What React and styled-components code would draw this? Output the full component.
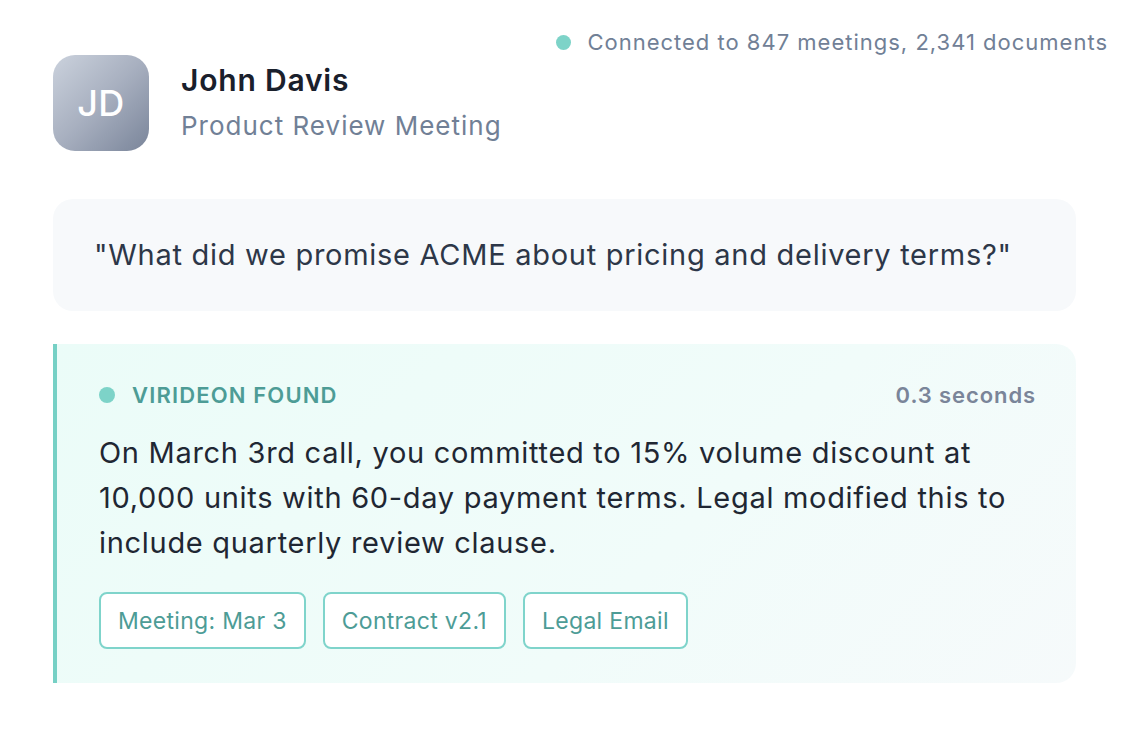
import styled, { createGlobalStyle } from "styled-components";

const GlobalStyle = createGlobalStyle`
  html, body {
    margin: 0;
    padding: 0;
    background: #ffffff;
    font-family: Inter, "Noto Sans", "Liberation Sans", sans-serif;
    -webkit-font-smoothing: antialiased;
  }
  * { box-sizing: border-box; }
`;

const Page = styled.div`
  width: 1136px;
  height: 736px;
  padding: 30px 28px 0 53px;
  display: flex;
  flex-direction: column;
`;

const StatusRow = styled.div`
  display: flex;
  justify-content: flex-end;
  align-items: center;
  gap: 16px;
  height: 24px;
  font-size: 22px;
  letter-spacing: 1px;
  color: #718096;
`;

const Dot = styled.span`
  width: ${(p) => p.size || 15}px;
  height: ${(p) => p.size || 15}px;
  border-radius: 50%;
  background: #7dd3c8;
  flex-shrink: 0;
`;

const Content = styled.div`
  width: 1023px;
  display: flex;
  flex-direction: column;
`;

const Header = styled.div`
  display: flex;
  align-items: center;
  gap: 32px;
  margin-top: 1px;
`;

const Avatar = styled.div`
  width: 96px;
  height: 96px;
  border-radius: 22px;
  background: linear-gradient(135deg, #cbd2dd 0%, #a7afbf 50%, #7a859a 100%);
  color: #ffffff;
  font-size: 36px;
  font-weight: 500;
  letter-spacing: 0.5px;
  display: flex;
  align-items: center;
  justify-content: center;
`;

const NameBlock = styled.div`
  display: flex;
  flex-direction: column;
  gap: 12px;
  margin-top: -2px;
`;

const Name = styled.div`
  font-size: 30px;
  font-weight: 600;
  color: #1a202c;
  line-height: 36px;
  letter-spacing: 0.8px;
`;

const Subtitle = styled.div`
  font-size: 26px;
  color: #718096;
  line-height: 32px;
  letter-spacing: 1px;
`;

const QueryCard = styled.div`
  margin-top: 48px;
  background: #f7f9fb;
  border-radius: 20px;
  padding: 38px 41px;
  font-size: 29px;
  line-height: 36px;
  letter-spacing: 0.72px;
  color: #2d3748;
`;

const ResultCard = styled.div`
  margin-top: 33px;
  background: linear-gradient(135deg, #ebfcf8 0%, #f1fcfa 60%, #f6fafb 100%);
  border-left: 4px solid #76d0c5;
  border-radius: 0 20px 20px 0;
  padding: 36px 40px 34px 42px;
  display: flex;
  flex-direction: column;
`;

const ResultHeader = styled.div`
  display: flex;
  align-items: center;
  justify-content: space-between;
  height: 30px;
`;

const Label = styled.div`
  display: flex;
  align-items: center;
  gap: 17px;
  font-size: 22px;
  font-weight: 600;
  color: #4d9c96;
  letter-spacing: 1.15px;
`;

const Timing = styled.div`
  font-size: 22px;
  font-weight: 600;
  color: #7a8599;
  letter-spacing: 0.9px;
`;

const Answer = styled.p`
  margin: 20px 0 0;
  font-size: 29px;
  line-height: 45px;
  letter-spacing: 0.7px;
  color: #1f2733;
`;

const Tags = styled.div`
  display: flex;
  gap: 17px;
  margin-top: 27px;
`;

const Tag = styled.div`
  height: 57px;
  padding: 0 17px;
  display: flex;
  align-items: center;
  border: 2px solid #7fd4cb;
  border-radius: 8px;
  background: #ffffff;
  font-size: 23px;
  letter-spacing: 0.3px;
  color: #4d9c96;
`;

export default function App() {
  const sources = ["Meeting: Mar 3", "Contract v2.1", "Legal Email"];
  return (
    <>
      <GlobalStyle />
      <Page>
        <StatusRow>
          <Dot />
          Connected to 847 meetings, 2,341 documents
        </StatusRow>
        <Content>
          <Header>
            <Avatar>JD</Avatar>
            <NameBlock>
              <Name>John Davis</Name>
              <Subtitle>Product Review Meeting</Subtitle>
            </NameBlock>
          </Header>
          <QueryCard>
            "What did we promise ACME about pricing and delivery terms?"
          </QueryCard>
          <ResultCard>
            <ResultHeader>
              <Label>
                <Dot size={16} />
                VIRIDEON FOUND
              </Label>
              <Timing>0.3 seconds</Timing>
            </ResultHeader>
            <Answer>
              On March 3rd call, you committed to 15% volume discount at
              10,000 units with 60-day payment terms. Legal modified this to
              include quarterly review clause.
            </Answer>
            <Tags>
              {sources.map((s) => (
                <Tag key={s}>{s}</Tag>
              ))}
            </Tags>
          </ResultCard>
        </Content>
      </Page>
    </>
  );
}
